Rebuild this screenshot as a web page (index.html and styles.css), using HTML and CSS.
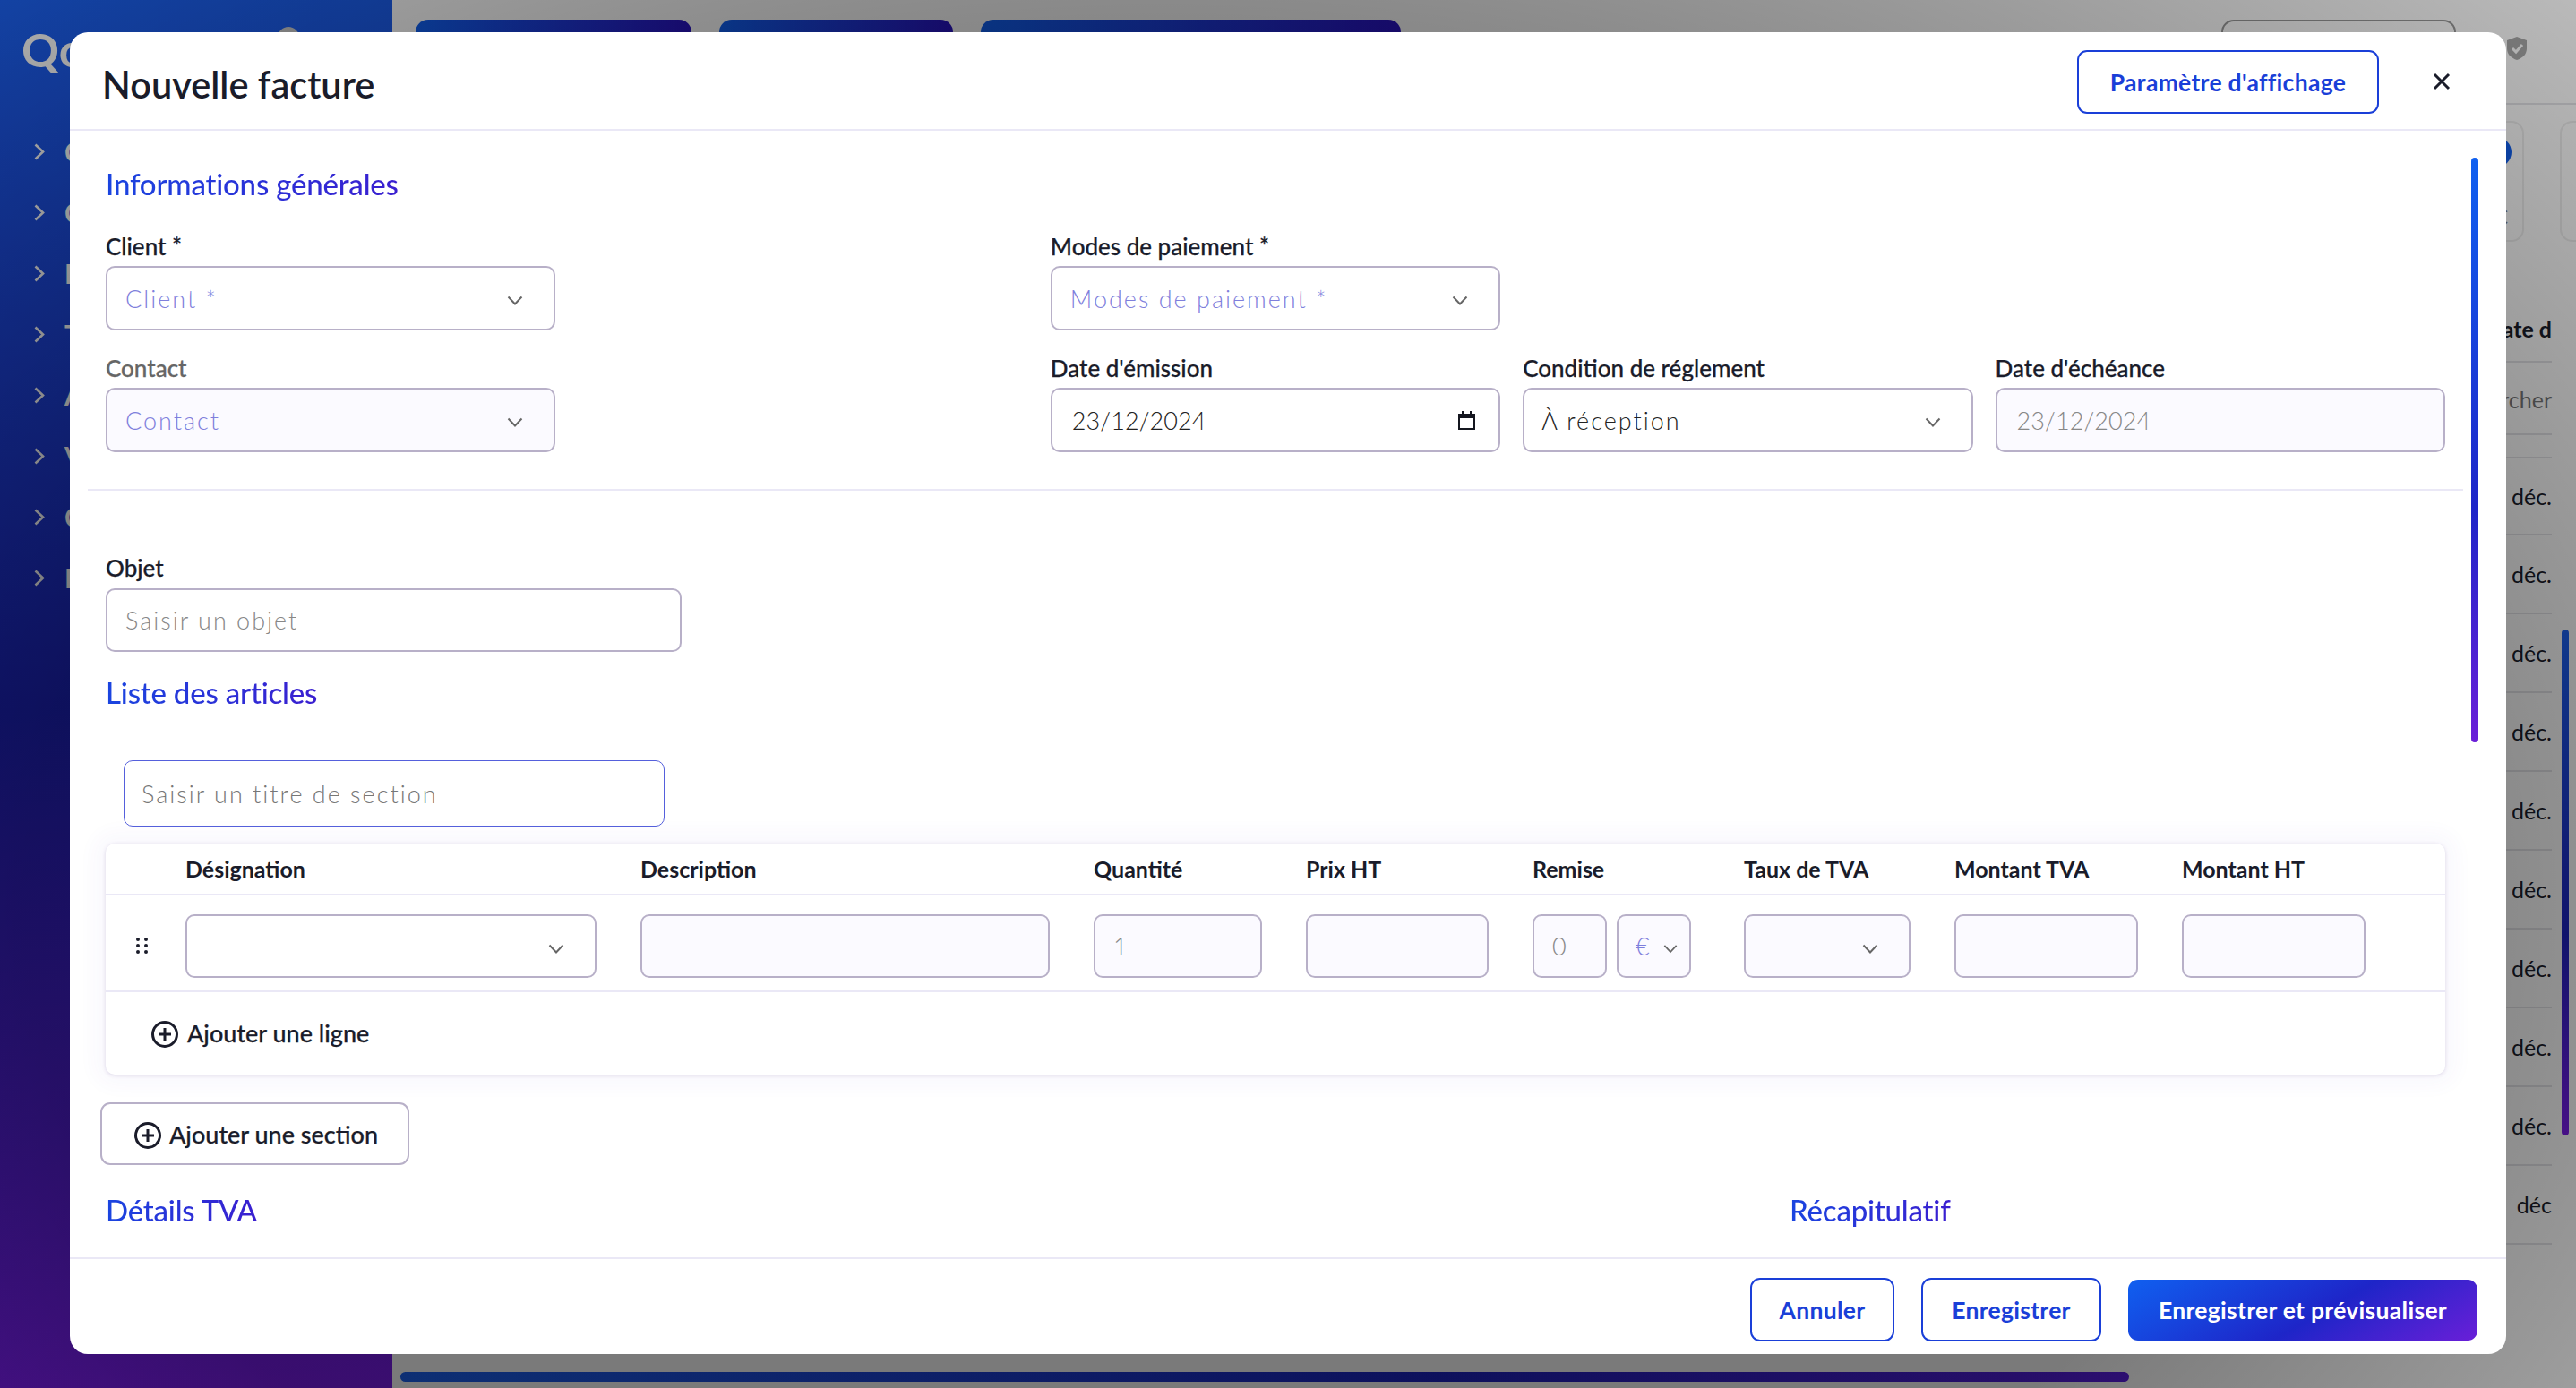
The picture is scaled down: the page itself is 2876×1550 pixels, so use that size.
FILE: index.html
```html
<!DOCTYPE html>
<html lang="fr">
<head>
  <meta charset="UTF-8">
  <title>Nouvelle facture</title>
  <link rel="stylesheet" href="styles.css">
</head>
<body>
  <div class="app">
    <aside class="sidebar">
      <div class="logo">Qo</div>
      <span class="avatar"></span>
      <nav class="nav">
        <div class="nav-item"><svg class="nav-chev" viewBox="0 0 12 19"><path d="M1.5 1.5l8.5 8-8.5 8"/></svg>C</div>
        <div class="nav-item"><svg class="nav-chev" viewBox="0 0 12 19"><path d="M1.5 1.5l8.5 8-8.5 8"/></svg>C</div>
        <div class="nav-item"><svg class="nav-chev" viewBox="0 0 12 19"><path d="M1.5 1.5l8.5 8-8.5 8"/></svg>F</div>
        <div class="nav-item"><svg class="nav-chev" viewBox="0 0 12 19"><path d="M1.5 1.5l8.5 8-8.5 8"/></svg>T</div>
        <div class="nav-item"><svg class="nav-chev" viewBox="0 0 12 19"><path d="M1.5 1.5l8.5 8-8.5 8"/></svg>A</div>
        <div class="nav-item"><svg class="nav-chev" viewBox="0 0 12 19"><path d="M1.5 1.5l8.5 8-8.5 8"/></svg>V</div>
        <div class="nav-item"><svg class="nav-chev" viewBox="0 0 12 19"><path d="M1.5 1.5l8.5 8-8.5 8"/></svg>C</div>
        <div class="nav-item"><svg class="nav-chev" viewBox="0 0 12 19"><path d="M1.5 1.5l8.5 8-8.5 8"/></svg>F</div>
      </nav>
    </aside>
    <main class="main">
      <div class="topbar">
        <span class="tab tab-a"></span>
        <span class="tab tab-b"></span>
        <span class="tab tab-c"></span>
        <span class="top-outline"></span>
        <svg class="shield" viewBox="0 0 24 28"><path d="M12 1l11 4v9c0 7-5 11-11 13C6 25 1 21 1 14V5z"/><path class="shield-check" d="M7 14l4 4 7-8"/></svg>
      </div>
      <div class="stats">
        <div class="stat"><span class="stat-dot"></span><span class="stat-val">€</span></div>
        <div class="stat stat-cut"></div>
      </div>
      <div class="list">
        <div class="list-head">Date d</div>
        <div class="list-search">Rechercher</div>
        <div class="list-row">déc.</div>
        <div class="list-row">déc.</div>
        <div class="list-row">déc.</div>
        <div class="list-row">déc.</div>
        <div class="list-row">déc.</div>
        <div class="list-row">déc.</div>
        <div class="list-row">déc.</div>
        <div class="list-row">déc.</div>
        <div class="list-row">déc.</div>
        <div class="list-row">déc</div>
      </div>
      <span class="scroll-y"></span>
      <span class="scroll-x"></span>
    </main>
  </div>

  <div class="overlay"></div>

  <section class="modal">
    <header class="modal-head">
      <h1 class="modal-title">Nouvelle facture</h1>
      <button class="btn btn-outline btn-settings">Paramètre d'affichage</button>
      <svg class="close" viewBox="0 0 20 20"><path d="M2 2l16 16M18 2L2 18"/></svg>
    </header>

    <div class="modal-body">
      <span class="modal-scroll"></span>
      <h3 class="section-title first">Informations générales</h3>

      <div class="info-grid">
        <div class="group">
          <label class="label">Client *</label>
          <div class="field select placeholder">Client *
            <svg class="chev" viewBox="0 0 18 11"><path d="M1.5 1.5L9 9.5l7.5-8"/></svg>
          </div>
        </div>
        <div class="group col-3">
          <label class="label">Modes de paiement *</label>
          <div class="field select placeholder">Modes de paiement *
            <svg class="chev" viewBox="0 0 18 11"><path d="M1.5 1.5L9 9.5l7.5-8"/></svg>
          </div>
        </div>
        <div class="group col-1">
          <label class="label muted">Contact</label>
          <div class="field select placeholder off">Contact
            <svg class="chev" viewBox="0 0 18 11"><path d="M1.5 1.5L9 9.5l7.5-8"/></svg>
          </div>
        </div>
        <div class="group col-3">
          <label class="label">Date d'émission</label>
          <div class="field select date">23/12/2024
            <svg class="cal" viewBox="0 0 19 21"><path d="M4 0h2v3h7V0h2v3h4v18H0V3h4zM2 8v11h15V8z"/></svg>
          </div>
        </div>
        <div class="group">
          <label class="label">Condition de réglement</label>
          <div class="field select value">À réception
            <svg class="chev" viewBox="0 0 18 11"><path d="M1.5 1.5L9 9.5l7.5-8"/></svg>
          </div>
        </div>
        <div class="group">
          <label class="label">Date d'échéance</label>
          <div class="field off grey date">23/12/2024</div>
        </div>
      </div>

      <hr class="divider">

      <div class="group object">
        <label class="label">Objet</label>
        <div class="field grey">Saisir un objet</div>
      </div>

      <h3 class="section-title articles">Liste des articles</h3>

      <div class="section-input">Saisir un titre de section</div>

      <div class="lines">
        <div class="lines-row lines-head">
          <span>Désignation</span>
          <span>Description</span>
          <span>Quantité</span>
          <span>Prix HT</span>
          <span>Remise</span>
          <span>Taux de TVA</span>
          <span>Montant TVA</span>
          <span>Montant HT</span>
        </div>
        <div class="lines-row lines-item">
          <svg class="grip" viewBox="0 0 13 18"><circle cx="2" cy="2" r="2"/><circle cx="11" cy="2" r="2"/><circle cx="2" cy="9" r="2"/><circle cx="11" cy="9" r="2"/><circle cx="2" cy="16" r="2"/><circle cx="11" cy="16" r="2"/></svg>
          <div class="field select cell"><svg class="chev" viewBox="0 0 18 11"><path d="M1.5 1.5L9 9.5l7.5-8"/></svg></div>
          <div class="field off cell"></div>
          <div class="field off grey cell">1</div>
          <div class="field off cell"></div>
          <div class="discount">
            <div class="field off grey cell">0</div>
            <div class="field off cell unit">€<svg class="chev" viewBox="0 0 18 11"><path d="M1.5 1.5L9 9.5l7.5-8"/></svg></div>
          </div>
          <div class="field select off cell"><svg class="chev" viewBox="0 0 18 11"><path d="M1.5 1.5L9 9.5l7.5-8"/></svg></div>
          <div class="field off cell"></div>
          <div class="field off cell"></div>
        </div>
        <div class="add-line">
          <svg class="plus" viewBox="0 0 30 30"><circle cx="15" cy="15" r="13.5"/><path d="M15 8v14M8 15h14"/></svg>
          Ajouter une ligne
        </div>
      </div>

      <button class="add-section">
        <svg class="plus" viewBox="0 0 30 30"><circle cx="15" cy="15" r="13.5"/><path d="M15 8v14M8 15h14"/></svg>
        Ajouter une section
      </button>

      <div class="totals">
        <h3 class="section-title">Détails TVA</h3>
        <h3 class="section-title">Récapitulatif</h3>
      </div>
    </div>

    <footer class="modal-foot">
      <button class="btn btn-outline btn-cancel">Annuler</button>
      <button class="btn btn-outline btn-save">Enregistrer</button>
      <button class="btn btn-primary">Enregistrer et prévisualiser</button>
    </footer>
  </section>
</body>
</html>
```

FILE: styles.css
```css
* {
  box-sizing: border-box;
}
html, body {
  margin: 0;
  width: 2876px;
  height: 1550px;
  overflow: hidden;
}
body {
  position: relative;
  font-family: "Lato", "Liberation Sans", sans-serif;
  color: #1a1c2a;
  background: #fff;
}
.app {
  display: flex;
  height: 100%;
}

/* page behind the dialog */
.sidebar {
  position: relative;
  width: 438px;
  background: linear-gradient(175deg, #1c62f2 0%, #1c22c0 50%, #7a1ce8 100%);
  color: #fff;
}
.logo {
  height: 130px;
  padding: 25px 0 0 24px;
  font-size: 52px;
  font-weight: 700;
  line-height: 60px;
  border-bottom: 1px solid rgba(255, 255, 255, .08);
}
.avatar {
  position: absolute;
  top: 30px;
  left: 310px;
  width: 24px;
  height: 24px;
  border-radius: 50%;
  background: #ccc;
}
.nav {
  display: flex;
  flex-direction: column;
  padding-top: 5px;
}
.nav-item {
  display: flex;
  align-items: center;
  height: 68px;
  padding-left: 38px;
  gap: 22px;
  font-size: 30px;
  font-weight: 700;
}
.nav-chev {
  width: 12px;
  height: 19px;
  fill: none;
  stroke: #fff;
  stroke-width: 2.6;
}
.main {
  position: relative;
  flex: 1;
  overflow: hidden;
  background: #fff;
}
.topbar {
  display: flex;
  align-items: flex-start;
  gap: 31px;
  height: 117px;
  padding: 22px 0 0 26px;
  border-bottom: 2px solid #e4e4e8;
}
.tab {
  height: 60px;
  border-radius: 14px;
  background: linear-gradient(100deg, #1060f0, #2a10c0);
}
.tab-a { width: 308px; }
.tab-b { width: 261px; }
.tab-c { width: 469px; }
.top-outline {
  width: 262px;
  height: 70px;
  margin-left: 885px;
  border: 2px solid #999;
  border-radius: 14px;
}
.shield {
  width: 24px;
  height: 28px;
  margin: 18px 0 0 25px;
  fill: #a8a8a8;
}
.shield-check {
  fill: none;
  stroke: #fff;
  stroke-width: 3;
}
.stats {
  display: flex;
  justify-content: flex-end;
  gap: 40px;
  height: 152px;
  padding-top: 18px;
}
.stat {
  position: relative;
  width: 300px;
  height: 135px;
  border: 2px solid #eee;
  border-radius: 14px;
}
.stat-cut {
  width: 18px;
  border-right: 0;
  border-radius: 14px 0 0 14px;
}
.stat-dot {
  position: absolute;
  top: 16px;
  right: 12px;
  width: 34px;
  height: 34px;
  border-radius: 50%;
  background: #1060f0;
}
.stat-val {
  position: absolute;
  top: 90px;
  right: 16px;
  font-size: 24px;
  color: #777;
}
.list {
  width: 400px;
  margin: 76px 27px 0 auto;
  text-align: right;
  font-size: 25px;
}
.list-head {
  height: 60px;
  padding-top: 7px;
  font-weight: 700;
  border-bottom: 2px solid #e4e4e8;
}
.list-search {
  height: 81px;
  padding-top: 26px;
  color: #777;
  border-bottom: 2px solid #e4e4e8;
}
.list-row {
  display: flex;
  align-items: center;
  justify-content: flex-end;
  height: 88px;
  border-bottom: 2px solid #e4e4e8;
}
.list-search + .list-row {
  margin-top: 24px;
  border-top: 2px solid #e4e4e8;
}
.scroll-y {
  position: absolute;
  top: 703px;
  right: 8px;
  width: 8px;
  height: 565px;
  border-radius: 4px;
  background: linear-gradient(180deg, #1c62f2, #1c22c0 60%, #7a1ce8);
}
.scroll-x {
  position: absolute;
  left: 9px;
  bottom: 7px;
  width: 1930px;
  height: 11px;
  border-radius: 6px;
  background: linear-gradient(90deg, #1c62f2, #1c22c0 60%, #5a1ce0);
}
.overlay {
  position: absolute;
  inset: 0;
  background: radial-gradient(ellipse 80% 100% at 45% 65%, rgba(0, 0, 0, .52) 55%, rgba(0, 0, 0, .24) 100%);
}

/* dialog */
.modal {
  position: absolute;
  top: 36px;
  left: 78px;
  width: 2720px;
  height: 1476px;
  display: flex;
  flex-direction: column;
  background: #fff;
  border-radius: 20px;
  overflow: hidden;
}
.modal-head {
  display: flex;
  align-items: center;
  flex-shrink: 0;
  height: 110px;
  padding: 0 62px 0 36px;
  border-bottom: 2px solid #eae8f6;
}
.modal-title {
  flex: 1;
  margin: 7px 0 0;
  font-size: 41.5px;
  font-weight: 600;
  line-height: 52px;
}
.close {
  width: 20px;
  height: 20px;
  margin: 2px 0 0 60px;
  fill: none;
  stroke: #1a1c2a;
  stroke-width: 3;
}
.btn {
  height: 71px;
  font-family: inherit;
  font-size: 26.5px;
  font-weight: 700;
  letter-spacing: .3px;
  border-radius: 11px;
  background: #fff;
}
.btn-outline {
  color: #1a3fd8;
  border: 2px solid #1a3fd8;
}
.btn-settings { width: 337px; margin-top: 3px; }
.btn-cancel { width: 161px; }
.btn-save { width: 201px; }
.btn-primary {
  width: 390px;
  height: 68px;
  color: #fff;
  border: 0;
  background: linear-gradient(150deg, #1060f0 0%, #1e25c8 55%, #6a1fd8 100%);
}
.modal-body {
  position: relative;
  flex: 1;
  min-height: 0;
  padding: 0 68px 0 40px;
  overflow: hidden;
}
.modal-scroll {
  position: absolute;
  top: 30px;
  right: 31px;
  width: 8px;
  height: 653px;
  border-radius: 4px;
  background: linear-gradient(180deg, #1060f0, #1e25c8 60%, #6a1fd8);
}
.section-title {
  width: fit-content;
  margin: 0;
  font-size: 33px;
  font-weight: 500;
  letter-spacing: -.2px;
  line-height: 40px;
  color: transparent;
  background: linear-gradient(90deg, #1a45e0, #3a1fd0);
  -webkit-background-clip: text;
  background-clip: text;
}
.section-title.first { margin-top: 39px; }
.section-title.articles { margin-top: 25px; }
.info-grid {
  display: grid;
  grid-template-columns: repeat(5, 1fr);
  gap: 27px 25px;
  margin-top: 35px;
}
.col-1 { grid-column-start: 1; }
.col-3 { grid-column-start: 3; }
.label {
  display: block;
  margin-bottom: 7px;
  font-size: 26px;
  font-weight: 500;
  line-height: 30px;
  -webkit-text-stroke: .25px;
}
.muted { color: #666; }
.field {
  display: flex;
  align-items: center;
  height: 72px;
  padding: 0 20px;
  font-size: 27px;
  font-weight: 300;
  letter-spacing: 2px;
  border: 2px solid #b8b0c8;
  border-radius: 10px;
  background: #fff;
  color: #222;
}
.select {
  justify-content: space-between;
  padding-right: 34px;
}
.placeholder { color: #7f7fdc; }
.grey { color: #888; }
.off { background: #fbfaff; }
.value { padding-left: 19px; }
.date { letter-spacing: .1px; padding-left: 22px; }
.date.select { padding-right: 26px; }
.chev {
  width: 18px;
  height: 11px;
  flex-shrink: 0;
  margin: 5px 0 0 auto;
  fill: none;
  stroke: #666;
  stroke-width: 2;
}
.cal {
  width: 19px;
  height: 21px;
  fill: #14161f;
}
.divider {
  height: 2px;
  margin: 41px -20px 0;
  border: 0;
  background: #eae8f6;
}
.object {
  width: 643px;
  margin-top: 71px;
}
.object .label { margin-bottom: 8px; }
.object .field { height: 71px; }
.section-input {
  display: flex;
  align-items: center;
  width: 604px;
  height: 74px;
  margin: 56px 0 0 20px;
  padding: 0 19px;
  font-size: 27px;
  font-weight: 300;
  letter-spacing: 2px;
  color: #777;
  border: 1px solid #5560dc;
  border-radius: 10px;
}
.lines {
  height: 258px;
  margin-top: 19px;
  border-radius: 10px;
  background: #fff;
  box-shadow: 0 1px 4px rgba(60, 40, 120, .16), 0 0 22px 12px rgba(90, 70, 200, .035);
}
.lines-row {
  display: grid;
  grid-template-columns: 459px 457px 188px 204px 187px 186px 205px 205px;
  column-gap: 49px;
  padding-left: 89px;
  border-bottom: 2px solid #eae8f6;
}
.lines-head {
  align-items: center;
  height: 58px;
  font-size: 25px;
  font-weight: 700;
}
.lines-item {
  position: relative;
  height: 108px;
  padding-top: 21px;
}
.grip {
  position: absolute;
  top: 47px;
  left: 34px;
  width: 13px;
  height: 18px;
  fill: #1a1c2a;
}
.cell {
  height: 71px;
}
.discount {
  display: flex;
  gap: 11px;
}
.discount .cell {
  width: 83px;
  flex: none;
}
.discount .unit {
  padding: 0 13px 0 19px;
  color: #7f7fdc;
}
.discount .chev {
  width: 16px;
}
.add-line {
  display: flex;
  align-items: center;
  gap: 10px;
  height: 92px;
  padding: 0 0 2px 51px;
  font-size: 27px;
  font-weight: 500;
  -webkit-text-stroke: .25px;
}
.plus {
  width: 30px;
  height: 30px;
  margin-top: 4px;
  flex-shrink: 0;
  fill: none;
  stroke: #1a1c2a;
  stroke-width: 3;
}
.add-section {
  display: flex;
  align-items: center;
  gap: 9px;
  width: 345px;
  height: 70px;
  margin: 31px 0 0 -6px;
  padding: 0 0 0 36px;
  font-family: inherit;
  font-size: 27px;
  font-weight: 500;
  color: #1a1c2a;
  -webkit-text-stroke: .25px;
  background: #fff;
  border: 2px solid #b8b0c8;
  border-radius: 11px;
}
.totals {
  display: grid;
  grid-template-columns: 1880px 1fr;
  margin-top: 30px;
}
.modal-foot {
  display: flex;
  align-items: center;
  justify-content: flex-end;
  flex-shrink: 0;
  gap: 30px;
  height: 108px;
  padding: 7px 32px 0 0;
  border-top: 2px solid #eae8f6;
}
```
